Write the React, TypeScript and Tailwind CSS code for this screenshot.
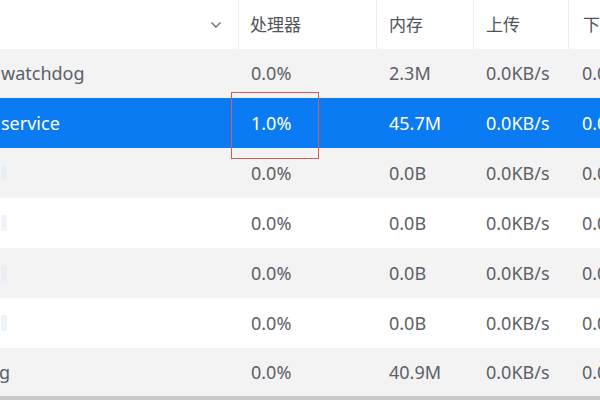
import React from "react";

const rows = [
  { name: "watchdog", cpu: "0.0%", mem: "2.3M", up: "0.0KB/s", down: "0.0KB/s", bg: "bg-[#f3f3f3]" },
  { name: "service", cpu: "1.0%", mem: "45.7M", up: "0.0KB/s", down: "0.0KB/s", bg: "bg-[#0b7bf4]", sel: true },
  { name: "", cpu: "0.0%", mem: "0.0B", up: "0.0KB/s", down: "0.0KB/s", bg: "bg-[#f3f3f3]", frag: true },
  { name: "", cpu: "0.0%", mem: "0.0B", up: "0.0KB/s", down: "0.0KB/s", bg: "bg-white", frag: true },
  { name: "", cpu: "0.0%", mem: "0.0B", up: "0.0KB/s", down: "0.0KB/s", bg: "bg-[#f3f3f3]", frag: true },
  { name: "", cpu: "0.0%", mem: "0.0B", up: "0.0KB/s", down: "0.0KB/s", bg: "bg-white", frag: true },
  { name: "g", cpu: "0.0%", mem: "40.9M", up: "0.0KB/s", down: "0.0KB/s", bg: "bg-[#f3f3f3]", last: true },
];

export default function App() {
  return (
    <div
      className="relative w-[600px] h-[400px] overflow-hidden bg-white flex flex-col"
      style={{ fontFamily: '"Noto Sans", "Noto Sans CJK SC", sans-serif' }}
    >
      {/* header */}
      <div className="h-[49px] shrink-0 grid grid-cols-[238px_138px_97px_95px_1fr] items-center bg-white text-[17px] text-[#4f5359]">
        <div className="h-full flex items-center justify-end pr-[16px]">
          <svg width="12" height="8" viewBox="0 0 12 8" fill="none" stroke="#6a6e74" strokeWidth="1.4">
            <path d="M1.5 1.5 L6 6 L10.5 1.5" />
          </svg>
        </div>
        <div className="h-full flex items-center border-l border-[#ececec] pl-[11px] whitespace-nowrap">处理器</div>
        <div className="h-full flex items-center border-l border-[#ececec] pl-[12px] whitespace-nowrap">内存</div>
        <div className="h-full flex items-center border-l border-[#ececec] pl-[12px] whitespace-nowrap">上传</div>
        <div className="h-full flex items-center border-l border-[#ececec] pl-[14px] whitespace-nowrap overflow-hidden">下载</div>
      </div>
      {rows.map((r, i) => (
        <div
          key={i}
          className={`${r.last ? "flex-1" : i === 0 ? "h-[49px]" : "h-[50px]"} shrink-0 grid grid-cols-[238px_138px_97px_95px_1fr] items-center text-[18px] ${r.bg} ${r.sel ? "text-white" : "text-[#5b6068]"}`}
        >
          <div className="whitespace-nowrap pl-[1px] flex items-center">
            {r.name && <span className={r.name === "g" ? "-ml-[2px]" : ""}>{r.name}</span>}
            {r.frag && <span className="w-[6px] h-[16px] rounded-r-[2px] bg-[#e3edf7] opacity-60" />}
          </div>
          <div className="pl-[13px] whitespace-nowrap">{r.cpu}</div>
          <div className="pl-[13px] whitespace-nowrap">{r.mem}</div>
          <div className="pl-[13px] whitespace-nowrap">{r.up}</div>
          <div className="pl-[14px] whitespace-nowrap overflow-hidden">{r.down}</div>
        </div>
      ))}
      <div className="h-[4px] shrink-0 bg-[#c9c9c9]" />
      {/* red highlight box */}
      <div className="absolute left-[231px] top-[92px] w-[88px] h-[67px] border border-[#dd5a52]" />
    </div>
  );
}
